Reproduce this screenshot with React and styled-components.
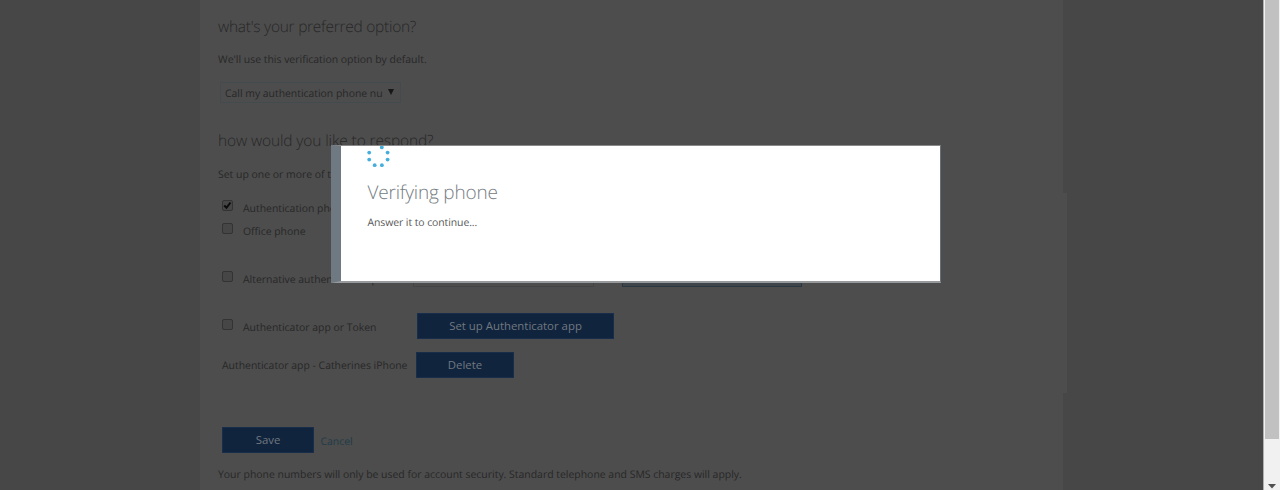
import React from "react";
import styled, { createGlobalStyle } from "styled-components";

const GlobalStyle = createGlobalStyle`
  * { box-sizing: border-box; }
  body { margin: 0; overflow: hidden; background: #474747; font-family: "Open Sans", "Noto Sans", sans-serif; text-rendering: geometricPrecision; }
`;
const Viewport = styled.div`
  position: relative;
  display: flex;
  width: 1280px;
  height: 490px;
  overflow: hidden;
  background: #474747;
  color: #272727;
`;
const Page = styled.main`
  display: flex;
  flex: 1;
  padding-left: 200px;
`;
const Panel = styled.section`
  width: 863px;
  height: 490px;
  padding-left: 18px;
  background: #4d4d4d;
`;
const PanelEdge = styled.div`
  width: 4px;
  height: 200px;
  margin-top: 193px;
  background: #4d4d4d;
`;
const Heading = styled.h2`
  margin: ${(p) => p.$gap || 0}px 0 0;
  height: ${(p) => p.$height}px;
  line-height: ${(p) => p.$height + 2}px;
  font-size: 15.5px;
  font-weight: 300;
  letter-spacing: ${(p) => p.$spacing || 0}px;
  white-space: nowrap;
`;
const Text = styled.p`
  margin: ${(p) => p.$gap || 0}px 0 0;
  height: 16px;
  line-height: 18px;
  font-size: 10.45px;
  letter-spacing: ${(p) => p.$spacing || 0}px;
  white-space: nowrap;
`;
const Select = styled.div`
  display: flex;
  align-items: center;
  justify-content: space-between;
  width: 181px;
  height: 21px;
  margin: 15px 0 0 2px;
  padding: 2px 6px 0 4px;
  border: 1px solid #444b4f;
  font-size: 10.4px;
  white-space: nowrap;
`;
const Caret = styled.span`
  flex: none;
  width: 6px;
  height: 6px;
  margin-bottom: 3px;
  background: #171717;
  clip-path: polygon(0 0, 100% 0, 50% 100%);
`;
const Row = styled.div`
  display: flex;
  align-items: center;
  height: ${(p) => p.$height || 23}px;
  margin-top: ${(p) => p.$gap || 0}px;
  padding-left: 4px;
`;
const Checkbox = styled.span`
  display: flex;
  flex: none;
  width: 11px;
  height: 11px;
  margin: 0 10px ${(p) => p.$lift ?? 6}px 0;
  border: 1px solid #333;
  border-radius: 2px;
  background: #464646;
  svg { display: block; overflow: visible; }
`;
const Label = styled.span`
  flex: none;
  width: ${(p) => p.$width || 174}px;
  margin-top: ${(p) => p.$shift ?? 1}px;
  font-size: 10.42px;
  line-height: 16px;
  white-space: nowrap;
`;
const Button = styled.button`
  flex: none;
  width: ${(p) => p.$width}px;
  height: 26px;
  padding: 0;
  border: 1px solid #172d49;
  background: #11243d;
  color: #707880;
  font: 400 11.4px/22px "Open Sans", sans-serif;
`;
const Field = styled.div`
  flex: none;
  width: 181px;
  height: 20px;
  margin: -5px 28px 0 -4px;
  border: 1px solid #444;
`;
const VerifyButton = styled.div`
  width: 180px;
  height: 20px;
  margin-top: -5px;
  border: 1px solid #2c3840;
  background: #3e464c;
`;
const Cancel = styled.a`
  margin: 3px 0 0 6.5px;
  color: #203b49;
  font-size: 10.4px;
`;
const Dialog = styled.div`
  position: absolute;
  left: 331px;
  top: 145px;
  width: 610px;
  height: 138px;
  padding: 0 26.5px;
  border-left: 10px solid #6f7982;
  border-right: 1px solid #667078;
  border-top: 1px solid #898989;
  border-bottom: 2px solid #979a9c;
  background: #fff;
  color: #575757;
`;
const Spinner = styled.svg`
  display: block;
  width: 24px;
  height: 22px;
  margin-left: -0.5px;
`;
const DialogTitle = styled.h1`
  margin: 9px 0 0;
  color: #747c82;
  font-size: 19px;
  font-weight: 300;
  line-height: 31px;
  letter-spacing: -0.2px;
`;
const Scrollbar = styled.aside`
  display: flex;
  flex-direction: column;
  justify-content: space-between;
  align-items: center;
  width: 17px;
  height: 490px;
  border-left: 1px solid #b0b0b0;
  background: #f1f1f1;
`;
const Thumb = styled.div`
  width: 14px;
  height: 439px;
  background: #c1c1c1;
`;
const ScrollArrow = styled.svg`
  width: 8px;
  height: 5px;
  margin-bottom: 1px;
`;

const dots = [[14.8, 1.4], [2.2, 6.6], [20.6, 6.6], [2.2, 13.6], [20.6, 13.6], [7.7, 19.2], [14.9, 19.2]];

function Check({ checked, lift }) {
  return (
    <Checkbox $lift={lift}>
      {checked && <svg width="9" height="9" viewBox="0 0 9 9"><path d="M1.2 4.5 3.5 6.8 7.5 1.5" fill="none" stroke="#0c0c0c" strokeWidth="2" /></svg>}
    </Checkbox>
  );
}

export default function App() {
  return (
    <>
      <GlobalStyle />
      <Viewport>
        <Page>
          <Panel>
            <Heading $height={51} $spacing={-0.27}>what's your preferred option?</Heading>
            <Text>We'll use this verification option by default.</Text>
            <Select>Call my authentication phone nu<Caret /></Select>
            <Heading $height={45} $gap={14} $spacing={-0.13}>how would you like to respond?</Heading>
            <Text $gap={4}>Set up one or more of these options.</Text>
            <Row $gap={15}><Check checked /><Label>Authentication phone</Label></Row>
            <Row><Check /><Label>Office phone</Label></Row>
            <Row $gap={25}><Check /><Label>Alternative authentication phone</Label><Field /><VerifyButton /></Row>
            <Row $gap={22} $height={26}><Check lift={4} /><Label $shift={3}>Authenticator app or Token</Label><Button $width={197}>Set up Authenticator app</Button></Row>
            <Row $gap={13} $height={26}><Label $width={194} $shift={2}>Authenticator app - Catherines iPhone</Label><Button $width={98}>Delete</Button></Row>
            <Row $gap={49} $height={26}><Button $width={92}>Save</Button><Cancel>Cancel</Cancel></Row>
            <Text $gap={13}>Your phone numbers will only be used for account security. Standard telephone and SMS charges will apply.</Text>
          </Panel>
          <PanelEdge />
        </Page>
        <Scrollbar>
          <Thumb />
          <ScrollArrow viewBox="0 0 8 5"><path d="M0 0h8L4 4.5z" fill="#505050" /></ScrollArrow>
        </Scrollbar>
        <Dialog>
          <Spinner viewBox="0 0 24 22">
            {dots.map(([x, y]) => <circle key={`${x}-${y}`} cx={x} cy={y} r="1.9" fill="#45aedb" />)}
          </Spinner>
          <DialogTitle>Verifying phone</DialogTitle>
          <Text $gap={6} $spacing={-0.08}>Answer it to continue...</Text>
        </Dialog>
      </Viewport>
    </>
  );
}
